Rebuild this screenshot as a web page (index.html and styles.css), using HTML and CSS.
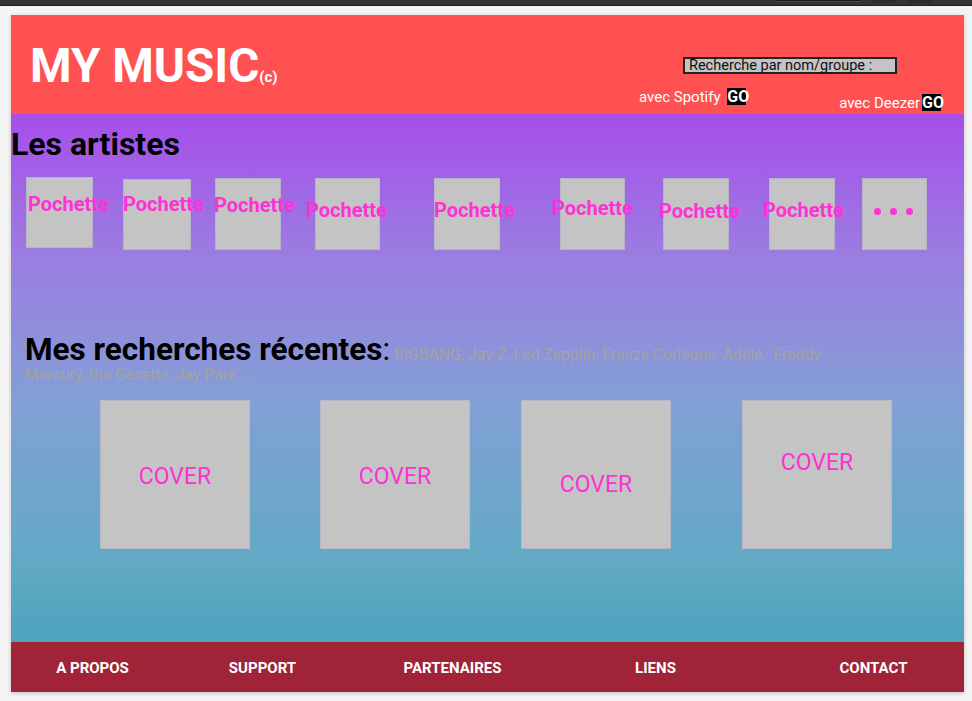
FILE: index.html
```html
<!DOCTYPE html>
<html lang="fr">
<head>
<meta charset="utf-8">
<title>MY MUSIC</title>
<link rel="stylesheet" href="styles.css">
</head>
<body>
<div class="topbar"><div class="topbar-field"></div><div class="topbar-btn"></div><div class="topbar-btn"></div></div>
<div class="frame">
  <header class="header">
    <h1 class="title">MY MUSIC<span class="copy">(c)</span></h1>
    <div class="search">
      <div class="search-box">Recherche par nom/groupe :</div>
      <div class="search-links">
        <div class="service">avec Spotify <span class="go go-spaced">GO</span></div>
        <div class="service service-deezer">avec Deezer<span class="go">GO</span></div>
      </div>
    </div>
  </header>
  <main class="main">
    <h2 class="section-title">Les artistes</h2>
    <div class="artists">
      <div class="card card-1"><span class="card-label">Pochette</span></div>
      <div class="card card-2"><span class="card-label">Pochette</span></div>
      <div class="card card-3"><span class="card-label">Pochette</span></div>
      <div class="card card-4"><span class="card-label">Pochette</span></div>
      <div class="card card-5"><span class="card-label">Pochette</span></div>
      <div class="card card-6"><span class="card-label">Pochette</span></div>
      <div class="card card-7"><span class="card-label">Pochette</span></div>
      <div class="card card-8"><span class="card-label">Pochette</span></div>
      <div class="card card-more"><span class="dot"></span><span class="dot"></span><span class="dot"></span></div>
    </div>
    <p class="recent"><span class="recent-title">Mes recherches récentes</span><span class="recent-colon">:</span> <span class="recent-list">BIGBANG, Jay-Z, Led Zepplin, Freeze Corleone, Adèle,&nbsp; Freddy</span><br><span class="recent-list">Mercury, the Gazette, Jay Park ...</span></p>
    <div class="covers">
      <div class="cover cover-1">COVER</div>
      <div class="cover cover-2">COVER</div>
      <div class="cover cover-3">COVER</div>
      <div class="cover cover-4">COVER</div>
    </div>
  </main>
  <footer class="footer">
    <a class="foot-link">A PROPOS</a>
    <a class="foot-link">SUPPORT</a>
    <a class="foot-link">PARTENAIRES</a>
    <a class="foot-link">LIENS</a>
    <a class="foot-link foot-last">CONTACT</a>
  </footer>
</div>
</body>
</html>
```
FILE: styles.css
```css
* { box-sizing: border-box; }
html, body { margin: 0; padding: 0; }
body {
  background: #f4f4f4;
  font-family: Roboto, "Liberation Sans", sans-serif;
  width: 972px;
  height: 701px;
  overflow: hidden;
}
.topbar {
  height: 6px;
  background: #333333;
  border-bottom: 1px solid #1e1e1e;
  display: flex;
}
.topbar-field {
  margin-left: 775px;
  width: 86px;
  height: 2px;
  background: #1b1b1b;
  border-bottom: 1px solid #4a4a4a;
}
.topbar-btn {
  margin-left: 10px;
  width: 25px;
  height: 3px;
  background: #2c2c2c;
  border-radius: 0 0 3px 3px;
}
.frame {
  margin: 9px 0 0 11px;
  width: 953px;
  height: 677px;
  display: flex;
  flex-direction: column;
  box-shadow: 0 1px 4px rgba(0, 0, 0, 0.22);
}
.header {
  height: 99px;
  background: #ff5151;
  display: flex;
  align-items: flex-start;
  flex: none;
}
.title {
  margin: 23px 0 0 19px;
  font-size: 47.5px;
  line-height: 56px;
  font-weight: 700;
  color: #ffffff;
  white-space: nowrap;
}
.copy {
  font-size: 15px;
  font-weight: 700;
  margin-left: 0;
}
.search {
  margin-left: auto;
  margin-right: 23px;
  width: 302px;
  display: flex;
  flex-direction: column;
}
.search-box {
  margin: 42px 0 0 44px;
  width: 214px;
  height: 17px;
  border: 2px solid #222222;
  background: #c4c4c4;
  font-size: 14.5px;
  line-height: 13px;
  padding-left: 4px;
  color: #111111;
  white-space: nowrap;
}
.search-links {
  display: flex;
  align-items: flex-start;
  margin-top: 14px;
}
.service {
  font-size: 15px;
  line-height: 17px;
  color: #ffffff;
  white-space: nowrap;
}
.service-deezer {
  margin-left: auto;
  margin-top: 6px;
}
.go {
  display: inline-block;
  width: 19px;
  height: 17px;
  line-height: 17px;
  background: #000000;
  color: #ffffff;
  font-weight: 700;
  font-size: 16px;
  white-space: nowrap;
  margin-left: 2px;
}
.go-spaced { margin-left: 3px; }

.main {
  height: 528px;
  flex: none;
  background: linear-gradient(180deg, #a64eea 0%, #9a7fe0 28%, #8c93da 45%, #81a0d4 55%, #63a9c6 84%, #4ca4bb 100%);
  display: flex;
  flex-direction: column;
}
.section-title {
  margin: 12px 0 0 0;
  font-size: 32px;
  line-height: 36px;
  font-weight: 700;
  color: #000000;
}
.artists {
  display: flex;
  align-items: flex-start;
  margin-top: 15px;
}
.card {
  position: relative;
  background: #c4c4c4;
  box-shadow: 0 0 0 1px rgba(175, 170, 205, 0.6) inset;
  width: 66px;
  height: 72px;
  margin-top: 1px;
  flex: none;
}
.card-label {
  position: absolute;
  font-size: 20px;
  line-height: 20px;
  font-weight: 700;
  color: #ff30d5;
  white-space: nowrap;
}
.card-1 { margin-left: 15px; width: 67px; height: 71px; margin-top: 0; }
.card-2 { margin-left: 30px; width: 68px; height: 71px; margin-top: 2px; }
.card-3 { margin-left: 24px; }
.card-4 { margin-left: 34px; width: 65px; }
.card-5 { margin-left: 54px; }
.card-6 { margin-left: 60px; width: 65px; }
.card-7 { margin-left: 38px; }
.card-8 { margin-left: 40px; }
.card-1 .card-label { left: 2px; top: 17px; }
.card-2 .card-label { left: 0; top: 15px; }
.card-3 .card-label { left: -1px; top: 17px; }
.card-4 .card-label { left: -9px; top: 22px; }
.card-5 .card-label { left: 0; top: 22px; }
.card-6 .card-label { left: -8px; top: 20px; }
.card-7 .card-label { left: -4px; top: 23px; }
.card-8 .card-label { left: -6px; top: 22px; }
.card-more {
  margin-left: 27px;
  width: 65px;
  display: flex;
  align-items: center;
  justify-content: center;
  gap: 9px;
  padding-bottom: 6px;
  padding-right: 2px;
}
.dot {
  width: 7px;
  height: 7px;
  border-radius: 50%;
  background: #ff30d5;
}
.recent {
  margin: 90px 0 0 14px;
  width: 850px;
  font-size: 15.8px;
  line-height: 20px;
  color: #a3a3a3;
}
.recent-title {
  font-size: 31.5px;
  font-weight: 700;
  color: #000000;
}
.recent-colon {
  font-size: 31.5px;
  color: #000000;
}
.covers {
  display: flex;
  align-items: flex-start;
  margin-top: 15px;
}
.cover {
  width: 150px;
  height: 149px;
  background: #c4c4c4;
  box-shadow: 0 0 0 1px rgba(175, 175, 205, 0.6) inset;
  display: flex;
  align-items: center;
  justify-content: center;
  font-size: 23px;
  color: #ff30d5;
  flex: none;
}
.cover-1 { margin-left: 89px; padding-top: 3px; }
.cover-2 { margin-left: 70px; padding-top: 3px; }
.cover-3 { margin-left: 51px; padding-top: 20px; }
.cover-4 { margin-left: 71px; padding-bottom: 24px; }

.footer {
  height: 50px;
  flex: none;
  background: #a02337;
  display: grid;
  grid-template-columns: 163px 177px 203px 203px 1fr;
  align-items: start;
}
.foot-link {
  padding-top: 17px;
  text-align: center;
  font-size: 15px;
  line-height: 18px;
  font-weight: 700;
  color: #ffffff;
  white-space: nowrap;
}
.foot-last { padding-left: 26px; }
```
